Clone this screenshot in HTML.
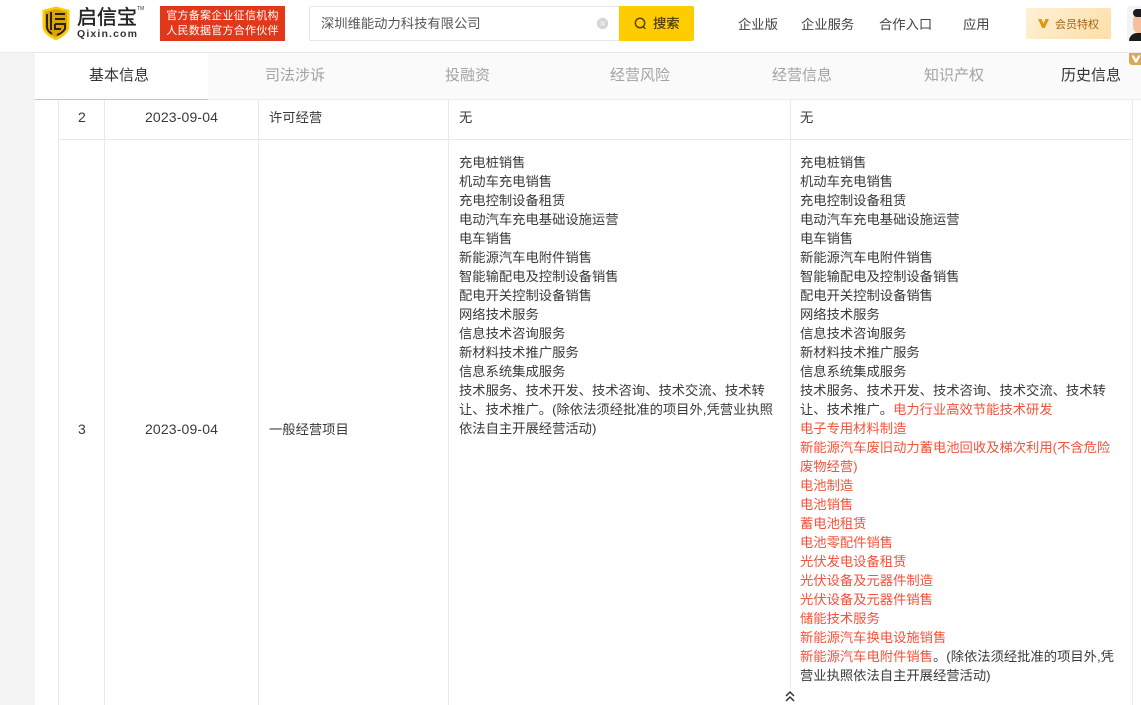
<!DOCTYPE html>
<html lang="zh-CN">
<head>
<meta charset="utf-8">
<title>启信宝</title>
<style>
html,body{margin:0;padding:0;background:#fff;}
body{position:relative;width:1141px;height:705px;overflow:hidden;font-family:"Liberation Sans","Noto Sans CJK SC",sans-serif;color:#333;}
.a{position:absolute;white-space:nowrap;}
.l{position:absolute;background:#e4ebf7;}
.t{font-size:13.3px;line-height:19px;color:#3a3a3a;}
.n{font-size:14px;line-height:19px;color:#3a3a3a;letter-spacing:.15px;}
.r{color:#f5523c;}
.tab{position:absolute;top:66px;font-size:15px;line-height:20px;color:#a3a3a3;white-space:nowrap;}
.nav{position:absolute;top:16px;font-size:13.3px;line-height:18px;color:#444;white-space:nowrap;}
</style>
</head>
<body>
<!-- page side background -->
<div class="a" style="left:0;top:53px;width:35px;height:652px;background:#f4f4f4;"></div>

<!-- header -->
<div class="a" style="left:0;top:52px;width:1141px;height:1px;background:#e8e8e8;"></div>
<svg class="a" style="left:42px;top:6px;" width="28" height="35" viewBox="0 0 28 35">
<path d="M0.5 4 L14 0.5 L27.5 4 V20 C27.5 27 20 31.500 14 34.500 C8 31.500 0.500 27 0.500 20 Z" fill="#f9cc06"/>
<path d="M3 6 L14 3 L25 6 V20 C25 25 19 29 14 31.500 C9 29 3 25 3 20 Z" fill="#d9a30a"/>
<path d="M5 8 V21 C5 24 7 26 10 28 M9 6 V24 M13 8 H23 M13 13 H23 M13 18 H23 V23 C21 26 18 28 15 29 M13 18 V23 H19" fill="none" stroke="#2d2206" stroke-width="2"/>
</svg>
<div class="a" style="left:77px;top:6px;font-size:20px;line-height:24px;color:#222;-webkit-text-stroke:.4px #222;">启信宝</div>
<div class="a" style="left:137px;top:6px;font-size:5px;line-height:6px;color:#333;">TM</div>
<div class="a" style="left:77px;top:28px;font-size:10.5px;line-height:12px;font-weight:bold;color:#333;letter-spacing:1.15px;">Qixin.com</div>
<div class="a" style="left:160px;top:6px;width:125px;height:35px;background:#e1381b;color:#fff;font-size:11px;line-height:15px;text-align:center;letter-spacing:.25px;padding-top:3px;box-sizing:border-box;">
<div>官方备案企业征信机构</div><div>人民数据官方合作伙伴</div></div>

<!-- search -->
<div class="a" style="left:309px;top:6px;width:310px;height:33px;border:1px solid #e8e8e8;border-right:0;border-radius:2px 0 0 2px;"></div>
<div class="a" style="left:321px;top:14px;font-size:13.3px;line-height:19px;color:#555;">深圳维能动力科技有限公司</div>
<svg class="a" style="left:596px;top:17px;" width="13" height="13" viewBox="0 0 13 13"><circle cx="6.500" cy="6.500" r="5.700" fill="#d6d6d6"/><path d="M4.400 4.400 L8.600 8.600 M8.600 4.400 L4.400 8.600" stroke="#f4f4f4" stroke-width="1"/></svg>
<div class="a" style="left:619px;top:6px;width:75px;height:35px;background:#ffcc00;border-radius:0 2px 2px 0;"></div>
<svg class="a" style="left:633px;top:16px;" width="15" height="15" viewBox="0 0 15 15"><circle cx="7" cy="7" r="4.700" fill="none" stroke="#5a4300" stroke-width="1.500"/><path d="M10 10.500 L12.300 12.800" stroke="#5a4300" stroke-width="1.500"/></svg>
<div class="a" style="left:653px;top:15px;font-size:13.3px;line-height:18px;color:#4d3a00;-webkit-text-stroke:.2px #4d3a00;">搜索</div>

<!-- nav -->
<div class="nav" style="left:738px;">企业版</div>
<div class="nav" style="left:801px;">企业服务</div>
<div class="nav" style="left:879px;">合作入口</div>
<div class="nav" style="left:963px;">应用</div>
<div class="a" style="left:1026px;top:8px;width:85px;height:31px;background:linear-gradient(135deg,#fff0d6,#fedfa6);border-radius:2px;"></div>
<svg class="a" style="left:1037px;top:18px;" width="13" height="11" viewBox="0 0 13 11"><path d="M1 1 H4.600 L6.500 5.600 L8.400 1 H12 L7.800 10 H5.200 Z" fill="#dd9a10"/></svg>
<div class="a" style="left:1055px;top:16px;font-size:11px;line-height:18px;color:#a0651a;">会员特权</div>
<div class="a" style="left:1127px;top:6px;width:14px;height:35px;background:#f2f3f6;border-radius:3px 0 0 3px;overflow:hidden;">
<div class="a" style="left:6px;top:6px;width:18px;height:22px;border-radius:8px;background:#f6bf9f;"></div>
<div class="a" style="left:6px;top:3px;width:20px;height:8px;border-radius:5px;background:#1c1a1d;"></div>
<div class="a" style="left:2px;top:27px;width:24px;height:12px;border-radius:8px 0 0 0;background:#1c1a1d;"></div>
</div>

<!-- tabs -->
<div class="a" style="left:35px;top:53px;width:1106px;height:46px;background:#fafafa;"></div>
<div class="a" style="left:35px;top:99px;width:1106px;height:1px;background:#e9edf3;"></div>
<div class="a" style="left:35px;top:53px;width:173px;height:46px;background:#fff;"></div>
<div class="a" style="left:35px;top:99px;width:173px;height:1px;background:#f6cb2e;"></div>
<div class="tab" style="left:89px;color:#333;">基本信息</div>
<div class="tab" style="left:265px;">司法涉诉</div>
<div class="tab" style="left:445px;">投融资</div>
<div class="tab" style="left:610px;">经营风险</div>
<div class="tab" style="left:772px;">经营信息</div>
<div class="tab" style="left:924px;">知识产权</div>
<div class="tab" style="left:1061px;color:#333;">历史信息</div>
<div class="a" style="left:1129px;top:53px;width:12px;height:12px;background:#d8a95c;border-radius:0 0 0 3px;"></div>
<svg class="a" style="left:1131px;top:55px;" width="10" height="8" viewBox="0 0 10 8"><path d="M0.500 0.500 H3 L5 4.500 L7 0.500 H9.500 L6 7.500 H4 Z" fill="#fff"/></svg>

<!-- table lines -->
<div class="l" style="left:58px;top:100px;width:1px;height:605px;"></div>
<div class="l" style="left:104px;top:100px;width:1px;height:605px;"></div>
<div class="l" style="left:258px;top:100px;width:1px;height:605px;"></div>
<div class="l" style="left:448px;top:100px;width:1px;height:605px;"></div>
<div class="l" style="left:790px;top:100px;width:1px;height:605px;"></div>
<div class="l" style="left:1132px;top:100px;width:1px;height:605px;"></div>
<div class="l" style="left:58px;top:139px;width:1075px;height:1px;"></div>

<!-- row 2 -->
<div class="a n" style="left:78px;top:108px;">2</div>
<div class="a n" style="left:145px;top:108px;">2023-09-04</div>
<div class="a t" style="left:269px;top:108px;">许可经营</div>
<div class="a t" style="left:459px;top:108px;">无</div>
<div class="a t" style="left:800px;top:108px;">无</div>

<!-- row 3 -->
<div class="a n" style="left:78px;top:420px;">3</div>
<div class="a n" style="left:145px;top:420px;">2023-09-04</div>
<div class="a t" style="left:269px;top:420px;">一般经营项目</div>

<div class="a t" style="left:459px;top:153px;">充电桩销售<br>机动车充电销售<br>充电控制设备租赁<br>电动汽车充电基础设施运营<br>电车销售<br>新能源汽车电附件销售<br>智能输配电及控制设备销售<br>配电开关控制设备销售<br>网络技术服务<br>信息技术咨询服务<br>新材料技术推广服务<br>信息系统集成服务<br>技术服务、技术开发、技术咨询、技术交流、技术转<br>让、技术推广。(除依法须经批准的项目外,凭营业执照<br>依法自主开展经营活动)</div>

<div class="a t" style="left:800px;top:153px;">充电桩销售<br>机动车充电销售<br>充电控制设备租赁<br>电动汽车充电基础设施运营<br>电车销售<br>新能源汽车电附件销售<br>智能输配电及控制设备销售<br>配电开关控制设备销售<br>网络技术服务<br>信息技术咨询服务<br>新材料技术推广服务<br>信息系统集成服务<br>技术服务、技术开发、技术咨询、技术交流、技术转<br>让、技术推广。<span class="r">电力行业高效节能技术研发</span><br><span class="r">电子专用材料制造</span><br><span class="r">新能源汽车废旧动力蓄电池回收及梯次利用(不含危险</span><br><span class="r">废物经营)</span><br><span class="r">电池制造</span><br><span class="r">电池销售</span><br><span class="r">蓄电池租赁</span><br><span class="r">电池零配件销售</span><br><span class="r">光伏发电设备租赁</span><br><span class="r">光伏设备及元器件制造</span><br><span class="r">光伏设备及元器件销售</span><br><span class="r">储能技术服务</span><br><span class="r">新能源汽车换电设施销售</span><br><span class="r">新能源汽车电附件销售</span>。(除依法须经批准的项目外,凭<br>营业执照依法自主开展经营活动)</div>

<!-- collapse chevrons -->
<div class="a" style="left:780px;top:688px;width:20px;height:17px;background:#fff;"></div>
<svg class="a" style="left:784px;top:690px;" width="12" height="13" viewBox="0 0 12 13"><path d="M2 6 L6 2 L10 6 M2 11 L6 7 L10 11" fill="none" stroke="#333" stroke-width="1.500"/></svg>
</body>
</html>
